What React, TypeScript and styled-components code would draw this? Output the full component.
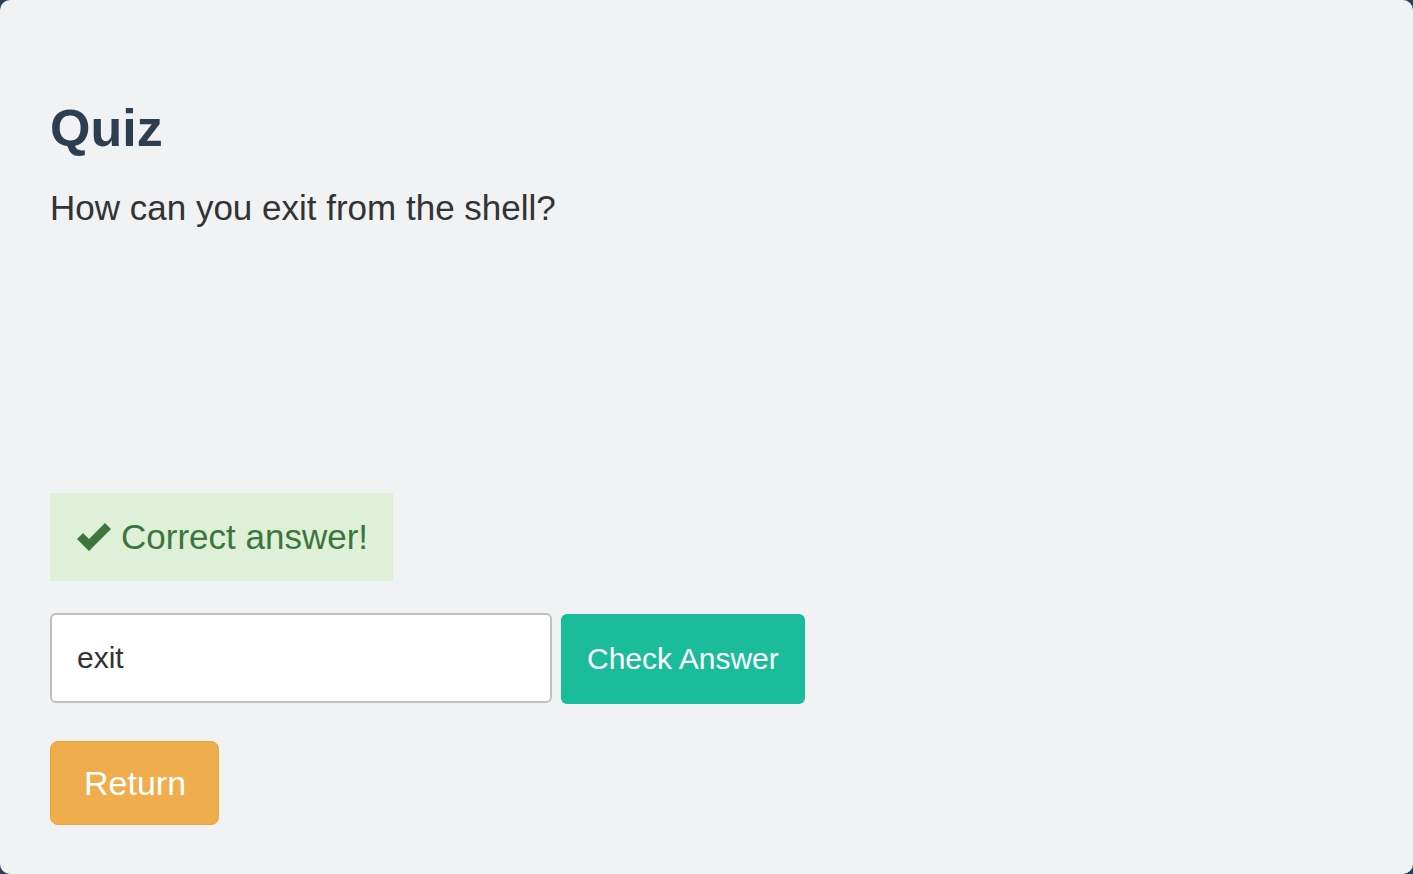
import React from "react";
import styled, { createGlobalStyle } from "styled-components";

const Global = createGlobalStyle`
  html, body { margin: 0; padding: 0; background: #2c3e50; }
  body { font-family: "Liberation Sans", Arial, sans-serif; }
  * { box-sizing: border-box; }
`;

const Panel = styled.div`
  min-height: 874px;
  background: #f0f2f4;
  border-radius: 10px;
  padding: 98px 50px 0 50px;
  display: flex;
  flex-direction: column;
  align-items: flex-start;
`;

const Title = styled.h1`
  margin: 0;
  font-size: 52px;
  line-height: 60px;
  font-weight: 700;
  color: #2c3e50;
`;

const Question = styled.p`
  margin: 28px 0 0 0;
  font-size: 35px;
  line-height: 44px;
  color: #333333;
`;

const Alert = styled.div`
  margin-top: 263px;
  height: 88px;
  padding: 0 25px 0 26px;
  display: flex;
  align-items: center;
  gap: 9px;
  background: #dff0d8;
  color: #3c763d;
  font-size: 35px;
`;

const Row = styled.div`
  margin-top: 32px;
  display: flex;
  align-items: flex-start;
  gap: 9px;
`;

const Input = styled.input`
  width: 502px;
  height: 90px;
  border: 2px solid #bfbfbf;
  border-radius: 6px;
  background: #ffffff;
  padding: 0 25px;
  font-family: "Liberation Sans", Arial, sans-serif;
  font-size: 30px;
  color: #333333;
  outline: none;
`;

const Button = styled.button<{ $variant: "primary" | "warning" }>`
  font-family: "Liberation Sans", Arial, sans-serif;
  color: #ffffff;
  cursor: pointer;
  ${(p) =>
    p.$variant === "primary"
      ? `
    margin-top: 1px;
    height: 90px;
    padding: 0 26px;
    background: #1abc9c;
    border: none;
    border-radius: 6px;
    font-size: 30px;
  `
      : `
    margin-top: 37px;
    height: 84px;
    padding: 0 32px 0 33px;
    background: #f0ad4e;
    border: 1px solid #eea236;
    border-radius: 8px;
    font-size: 34px;
  `}
`;

const Check = () => (
  <svg width="36" height="30" viewBox="0 0 36 30">
    <path d="M1 17 L7 11 L13 17 L29 1 L35 7 L13 29 Z" fill="#3c763d" />
  </svg>
);

export default function App() {
  return (
    <>
      <Global />
      <Panel>
        <Title>Quiz</Title>
        <Question>How can you exit from the shell?</Question>
        <Alert>
          <Check />
          <span>Correct answer!</span>
        </Alert>
        <Row>
          <Input defaultValue="exit" />
          <Button $variant="primary">Check Answer</Button>
        </Row>
        <Button $variant="warning">Return</Button>
      </Panel>
    </>
  );
}
